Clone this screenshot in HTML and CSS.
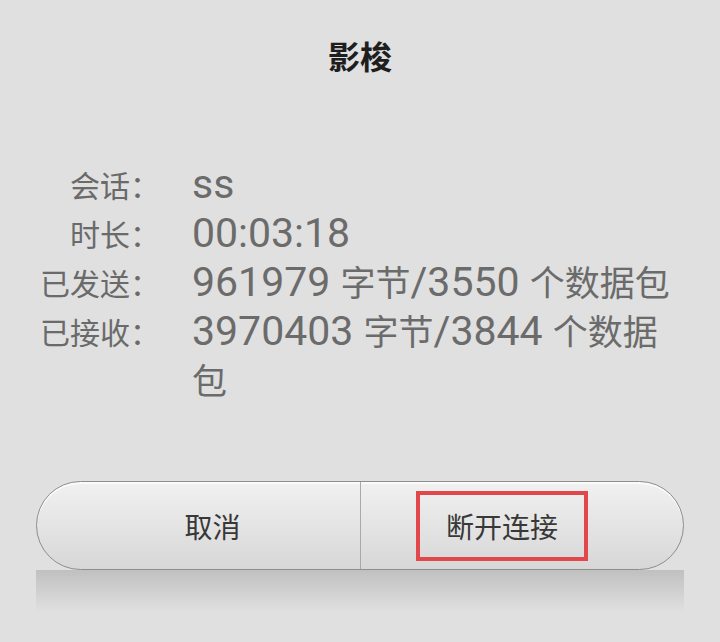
FILE: index.html
```
<!DOCTYPE html>
<html lang="zh-CN">
<head>
<meta charset="utf-8">
<title>影梭</title>
<link rel="stylesheet" href="styles.css">
</head>
<body>
<div class="dialog">
  <div class="title">影梭</div>
  <div class="info">
    <div class="label">会话：</div>
    <div class="value">ss</div>
    <div class="label">时长：</div>
    <div class="value">00:03:18</div>
    <div class="label">已发送：</div>
    <div class="value">961979 <span class="cjk">字节</span>/3550 <span class="cjk">个数据包</span></div>
    <div class="label">已接收：</div>
    <div class="value">3970403 <span class="cjk">字节</span>/3844 <span class="cjk">个数据包</span></div>
  </div>
  <div class="btn-bar">
    <div class="half half-left">取消</div>
    <div class="half half-right"><span class="highlight">断开连接</span></div>
  </div>
  <div class="btn-shadow"></div>
</div>
</body>
</html>
```
FILE: styles.css
```
html, body {
  margin: 0;
  padding: 0;
  background: #e0e0e0;
}
body {
  font-family: "Noto Sans CJK SC", sans-serif;
  height: 642px;
  overflow: hidden;
}
.title {
  text-align: center;
  font-size: 32px;
  line-height: 32px;
  padding-top: 39px;
  font-weight: bold;
  color: #1e1e1e;
}
.info {
  margin-top: 89px;
  display: grid;
  grid-template-columns: 160px 1fr;
  column-gap: 32px;
  padding-right: 40px;
  align-items: start;
}
.label {
  text-align: right;
  font-size: 30px;
  line-height: 49px;
  height: 49px;
  color: #6a6a6a;
}
.value {
  font-family: Roboto, "Noto Sans CJK SC", sans-serif;
  font-size: 41px;
  line-height: 49px;
  color: #6b6b6b;
}
.cjk {
  font-family: "Noto Sans CJK SC", sans-serif;
  font-size: 35px;
  line-height: 1;
}
.btn-bar {
  margin: 76px 36px 0;
  height: 87px;
  border: 1px solid #8e8e8e;
  border-radius: 45px;
  background: linear-gradient(#f1f1f1, #d7d7d7);
  box-shadow: inset 0 2px 0 #fbfbfb;
  display: flex;
  overflow: hidden;
}
.half {
  flex: 0 0 50%;
  box-sizing: border-box;
  display: flex;
  align-items: center;
  justify-content: center;
  font-size: 28px;
  line-height: 28px;
  color: #383838;
}
.half-left {
  padding-left: 28px;
}
.half-right {
  border-left: 1px solid #a9a9a9;
  padding-right: 40px;
}
.highlight {
  border: 4px solid #e2474b;
  padding: 17px 26px;
}
.btn-shadow {
  margin: 0 36px;
  height: 42px;
  background: linear-gradient(#c0c0c0, rgba(224, 224, 224, 0));
}
```
